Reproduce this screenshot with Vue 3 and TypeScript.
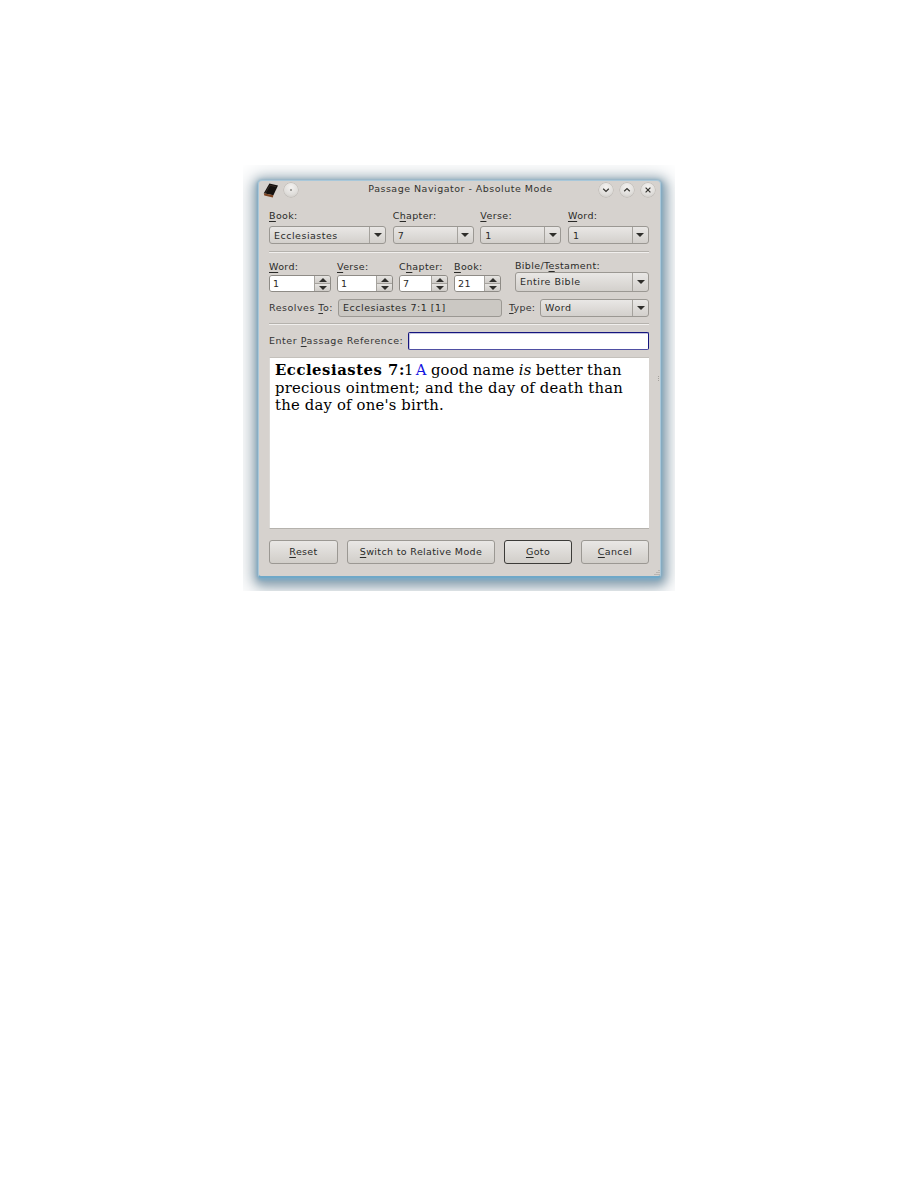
<script setup lang="ts">
const bookFields = [
  { pre: '', key: 'B', post: 'ook:', value: 'Ecclesiastes' },
  { pre: 'C', key: 'h', post: 'apter:', value: '7' },
  { pre: '', key: 'V', post: 'erse:', value: '1' },
  { pre: '', key: 'W', post: 'ord:', value: '1' },
]
const spinFields = [
  { pre: '', key: 'W', post: 'ord:', value: '1' },
  { pre: '', key: 'V', post: 'erse:', value: '1' },
  { pre: 'C', key: 'h', post: 'apter:', value: '7' },
  { pre: '', key: 'B', post: 'ook:', value: '21' },
]
</script>

<template>
  <div class="stage">
    <div class="glow">
      <div class="window">
        <header class="titlebar">
          <svg class="book" viewBox="0 0 16 16" width="16" height="16" aria-hidden="true">
            <path d="M.8 11.2 6.4 1.6 15 3.6l-4.6 9.6z" fill="#15110f" />
            <path d="M.8 11.2l.5 2.2 8.5 2.2.6-2.4z" fill="#7d4523" />
            <path d="M2.4 11 7 3.2l6 1.5" fill="none" stroke="#3d302a" stroke-width=".8" />
          </svg>
          <span class="orb pin"><i class="dot"></i></span>
          <span class="title">Passage Navigator - Absolute Mode</span>
          <span class="orb">
            <svg viewBox="0 0 14 14" width="14" height="14"><path d="M4.2 5.8 7 8.4l2.8-2.6" class="glyph" /></svg>
          </span>
          <span class="orb">
            <svg viewBox="0 0 14 14" width="14" height="14"><path d="M4.2 8.2 7 5.6l2.8 2.6" class="glyph" /></svg>
          </span>
          <span class="orb">
            <svg viewBox="0 0 14 14" width="14" height="14"><path d="M4.6 4.6l4.8 4.8m0-4.8-4.8 4.8" class="glyph" /></svg>
          </span>
        </header>

        <div class="content">
          <section class="row-books">
            <div v-for="f in bookFields" :key="f.post + f.key" class="field">
              <label class="lbl">{{ f.pre }}<u>{{ f.key }}</u>{{ f.post }}</label>
              <div class="combo"><span class="val">{{ f.value }}</span><span class="drop"><i class="tri"></i></span></div>
            </div>
          </section>

          <hr class="sep first" />

          <section class="row-spins">
            <div v-for="f in spinFields" :key="f.post + f.key" class="field">
              <label class="lbl">{{ f.pre }}<u>{{ f.key }}</u>{{ f.post }}</label>
              <div class="spin">
                <span class="spin-val">{{ f.value }}</span>
                <span class="spin-btns">
                  <span class="step"><i class="tri up"></i></span>
                  <span class="step"><i class="tri"></i></span>
                </span>
              </div>
            </div>
            <div class="field testament">
              <label class="lbl">Bible/T<u>e</u>stament:</label>
              <div class="combo tall"><span class="val raised">Entire Bible</span><span class="drop"><i class="tri"></i></span></div>
            </div>
          </section>

          <section class="row-resolve">
            <label class="lbl small">Resolves <u>T</u>o:</label>
            <div class="resolved">Ecclesiastes 7:1 [1]</div>
            <label class="lbl small type"><u>T</u>ype:</label>
            <div class="combo"><span class="val raised">Word</span><span class="drop"><i class="tri"></i></span></div>
          </section>

          <hr class="sep second" />

          <section class="row-entry">
            <label class="lbl small wide">Enter <u>P</u>assage Reference:</label>
            <div class="entry"></div>
          </section>

          <article class="browser">
            <span class="line tight"><b>Ecclesiastes 7:</b>1 <span class="blue">A</span> good name <i>is</i> better than</span>
            <span class="line">precious ointment; and the day of death than</span>
            <span class="line">the day of one's birth.</span>
          </article>

          <footer class="actions">
            <button class="btn reset" type="button"><u>R</u>eset</button>
            <button class="btn switch" type="button"><u>S</u>witch to Relative Mode</button>
            <button class="btn goto" type="button"><u>G</u>oto</button>
            <button class="btn cancel" type="button"><u>C</u>ancel</button>
          </footer>
        </div>

        <span class="split-dots"></span>
        <svg class="grip" viewBox="0 0 7 7" width="7" height="7" aria-hidden="true">
          <path d="M5.5 1h1v1h-1zM3.5 3h1v1h-1zM5.5 3h1v1h-1zM1.5 5h1v1h-1zM3.5 5h1v1h-1zM5.5 5h1v1h-1z" fill="#9c9994" />
        </svg>
      </div>
    </div>
  </div>
</template>

<style scoped>
.stage {
  width: 918px;
  height: 1188px;
  padding: 165px 0 0 243px;
  box-sizing: border-box;
  background: #fff;
  font-family: "DejaVu Sans", sans-serif;
  font-size: 9.5px;
  letter-spacing: 0.35px;
  color: #2a2a28;
}
.glow {
  width: 432px;
  height: 426px;
  padding: 15px 14px 13px 15px;
  box-sizing: border-box;
  overflow: hidden;
}
.window {
  position: relative;
  width: 403px;
  height: 398px;
  box-sizing: border-box;
  background: #d6d2ce;
  border-radius: 4px;
  border: 1px solid #a9c8da;
  border-bottom: 2px solid #6fa8c8;
  box-shadow:
    0 1px 3px 1px #7dabc6,
    1px 3px 10px 4px #8ba3b3,
    0 4px 20px 8px #c4ccd1;
  display: flex;
  flex-direction: column;
}
.titlebar {
  height: 18px;
  padding: 0 5px 0 4px;
  display: flex;
  align-items: center;
  gap: 7px;
}
.book { margin-right: -2px; flex: none; }
.title {
  flex: 1;
  text-align: center;
  font-size: 9.5px;
  line-height: 16px;
  padding-bottom: 2px;
  letter-spacing: 0.49px;
  color: #33332f;
  padding-left: 24px;
}
.orb {
  width: 14px;
  height: 14px;
  border-radius: 50%;
  flex: none;
  background: radial-gradient(circle at 50% 30%, #f4f2f0 0%, #e0dedb 60%, #c6c3be 100%);
  box-shadow: 0 0 0 .5px #b5b1ac;
  display: flex;
  align-items: center;
  justify-content: center;
}
.dot { width: 2px; height: 2px; border-radius: 50%; background: #8a8884; }
.glyph { fill: none; stroke: #34332f; stroke-width: 1.2; }
.content {
  flex: 1;
  padding: 0 11px 0 10px;
  display: flex;
  flex-direction: column;
}
.lbl { display: block; line-height: 12px; white-space: nowrap; }
.lbl u, .btn u { text-underline-offset: 1.5px; }

.row-books {
  margin-top: 11px;
  display: grid;
  grid-template-columns: 117px 81px 81px 81px;
  column-gap: 6.67px;
}
.field { display: flex; flex-direction: column; min-width: 0; }
.row-books .lbl { margin-bottom: 4px; }

.combo {
  height: 18px;
  box-sizing: border-box;
  display: flex;
  align-items: center;
  border: 1px solid #9b9893;
  border-radius: 3px;
  background: linear-gradient(#e9e7e5, #d3d0cc);
  min-width: 0;
}
.combo.tall { height: 20px; }
.val { flex: 1; padding-left: 4px; white-space: nowrap; letter-spacing: 0.5px; }
.val.raised { padding-bottom: 2px; }
.drop {
  width: 15px;
  align-self: stretch;
  flex: none;
  border-left: 1px solid #a5a29d;
  display: flex;
  align-items: center;
  justify-content: center;
}
.tri {
  width: 0;
  height: 0;
  border-left: 4px solid transparent;
  border-right: 4px solid transparent;
  border-top: 4px solid #2f2e2b;
}
.tri.up { border-top: 0; border-bottom: 4px solid #2f2e2b; }

.sep {
  margin: 0;
  border: 0;
  height: 1px;
  background: #f1efed;
  box-shadow: 0 -1px 0 #b5b2ad;
}
.sep.first { margin-top: 8px; }
.sep.second { margin-top: 7px; }

.row-spins {
  margin-top: 7px;
  display: grid;
  grid-template-columns: 62px 56px 49px 47px 134px;
  column-gap: 6px;
  align-items: end;
}
.row-spins .lbl { margin-bottom: 2px; }
.testament .lbl { margin-bottom: 0; }
.testament { margin-left: 8px; width: 134px; }
.spin {
  height: 17px;
  box-sizing: border-box;
  display: flex;
  border: 1px solid #8e8b86;
  border-radius: 3px;
  background: #d5d2ce;
  overflow: hidden;
}
.spin-val {
  flex: 1;
  background: #fff;
  padding-left: 3px;
  line-height: 15px;
  min-width: 0;
}
.spin-btns {
  width: 15px;
  flex: none;
  display: flex;
  flex-direction: column;
  border-left: 1px solid #a5a29d;
}
.step {
  flex: 1;
  display: flex;
  align-items: center;
  justify-content: center;
  background: linear-gradient(#e6e4e1, #cfccc8);
}
.step + .step { border-top: 1px solid #a5a29d; }

.row-resolve {
  margin-top: 7px;
  height: 18px;
  display: flex;
  align-items: center;
}
.lbl.small { color: #333; letter-spacing: 0.5px; }
.lbl.wide { letter-spacing: 0.54px; }
.lbl.type { letter-spacing: 0.2px; }
.resolved {
  width: 164px;
  height: 18px;
  box-sizing: border-box;
  margin-left: 5px;
  padding-left: 4px;
  line-height: 16px;
  letter-spacing: 0.5px;
  border: 1px solid #9b9893;
  border-radius: 3px;
  background: #cbc8c3;
  white-space: nowrap;
  flex: none;
}
.type { margin-left: 7px; margin-right: 5px; }
.row-resolve .combo { flex: 1; }

.row-entry {
  margin-top: 7px;
  height: 18px;
  display: flex;
  align-items: center;
  gap: 5px;
}
.entry {
  flex: 1;
  height: 18px;
  box-sizing: border-box;
  background: #fff;
  border: 1px solid #15157e;
  border-radius: 2px;
  border-bottom-color: #4f4fa3;
  box-shadow: inset 1px 1px 0 #c5c5e0;
}
.browser {
  margin-top: 7px;
  height: 172px;
  box-sizing: border-box;
  background: #fff;
  border-top: 1px solid #c4c1bc;
  border-left: 1px solid #dcdad7;
  border-bottom: 1px solid #b5b2ad;
  padding: 3px 6px 0 5px;
  font-family: "DejaVu Serif", serif;
  font-size: 14.8px;
  line-height: 17.5px;
  letter-spacing: 0.2px;
  color: #000;
}
.line { display: block; white-space: nowrap; }
.line.tight { word-spacing: -0.7px; }
.line b { letter-spacing: 0.55px; word-spacing: 0; margin-right: -1px; }
.blue { color: #1515e0; margin-left: -2px; }
.actions {
  margin-top: 11px;
  display: flex;
}
.btn {
  height: 24px;
  box-sizing: border-box;
  padding: 0 0 2px;
  border: 1px solid #9b9893;
  border-radius: 3px;
  background: linear-gradient(#e9e7e5, #d1cec9);
  font: inherit;
  letter-spacing: inherit;
  color: #2a2a28;
  flex: none;
}
.reset { width: 69px; }
.switch { width: 148px; margin-left: 9px; }
.goto { width: 68px; margin-left: 9px; border-color: #3c3b38; }
.cancel { width: 68px; margin-left: 9px; }

.split-dots {
  position: absolute;
  right: 1px;
  top: 195px;
  width: 1px;
  height: 6px;
  background: repeating-linear-gradient(#a5a29d 0 1px, transparent 1px 2px);
}
.grip { position: absolute; right: 0; bottom: 0; }
</style>
